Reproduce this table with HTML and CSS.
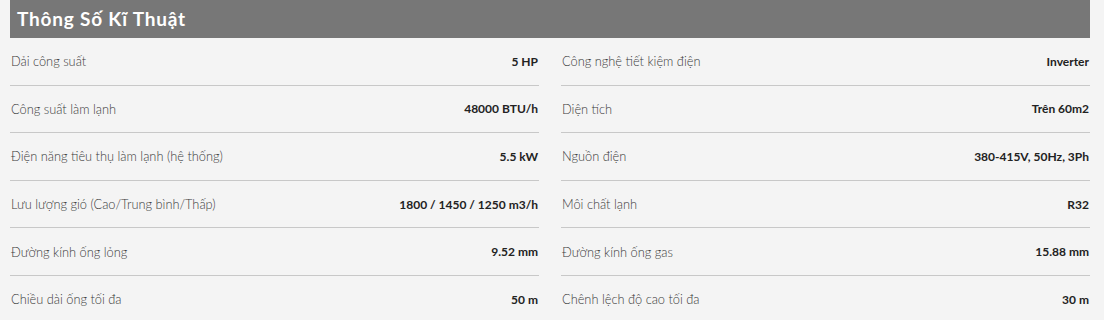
FILE: index.html
```html
<!DOCTYPE html>
<html lang="vi">
<head>
<meta charset="utf-8">
<link rel="stylesheet" href="styles.css">
</head>
<body>
<section class="specs">
  <h2 class="specs-title">Thông Số Kĩ Thuật</h2>
  <div class="specs-grid">
    <div class="row"><span class="label">Dải công suất</span><span class="value">5 HP</span></div>
    <div class="row"><span class="label">Công nghệ tiết kiệm điện</span><span class="value">Inverter</span></div>
    <div class="row"><span class="label">Công suất làm lạnh</span><span class="value">48000 BTU/h</span></div>
    <div class="row"><span class="label">Diện tích</span><span class="value">Trên 60m2</span></div>
    <div class="row"><span class="label">Điện năng tiêu thụ làm lạnh (hệ thống)</span><span class="value">5.5 kW</span></div>
    <div class="row"><span class="label">Nguồn điện</span><span class="value">380-415V, 50Hz, 3Ph</span></div>
    <div class="row"><span class="label">Lưu lượng gió (Cao/Trung bình/Thấp)</span><span class="value">1800 / 1450 / 1250 m3/h</span></div>
    <div class="row"><span class="label">Môi chất lạnh</span><span class="value">R32</span></div>
    <div class="row"><span class="label">Đường kính ống lỏng</span><span class="value">9.52 mm</span></div>
    <div class="row"><span class="label">Đường kính ống gas</span><span class="value">15.88 mm</span></div>
    <div class="row"><span class="label">Chiều dài ống tối đa</span><span class="value">50 m</span></div>
    <div class="row"><span class="label">Chênh lệch độ cao tối đa</span><span class="value">30 m</span></div>
  </div>
</section>
</body>
</html>
```

FILE: styles.css
```css
html, body {
  margin: 0;
  padding: 0;
  background: #f4f4f4;
}
body {
  font-family: "Lato", "Open Sans", sans-serif;
  color: #333;
}
.specs {
  padding: 0 14px 0 10px;
}
.specs-title {
  margin: 0;
  height: 38px;
  box-sizing: border-box;
  background: #777777;
  color: #ffffff;
  font-size: 19px;
  font-weight: 700;
  line-height: 38px;
  padding-left: 7px;
  letter-spacing: 0.8px;
}
.specs-grid {
  display: grid;
  grid-template-columns: 1fr 1fr;
  column-gap: 22px;
}
.row {
  display: flex;
  justify-content: space-between;
  align-items: center;
  height: 46.6px;
  border-bottom: 1px solid #c8c8c8;
  padding: 0 1px;
}
.label {
  font-size: 12.8px;
  font-weight: 300;
  color: #3a3a3a;
}
.value {
  font-size: 12px;
  font-weight: 700;
  color: #222;
}
```
